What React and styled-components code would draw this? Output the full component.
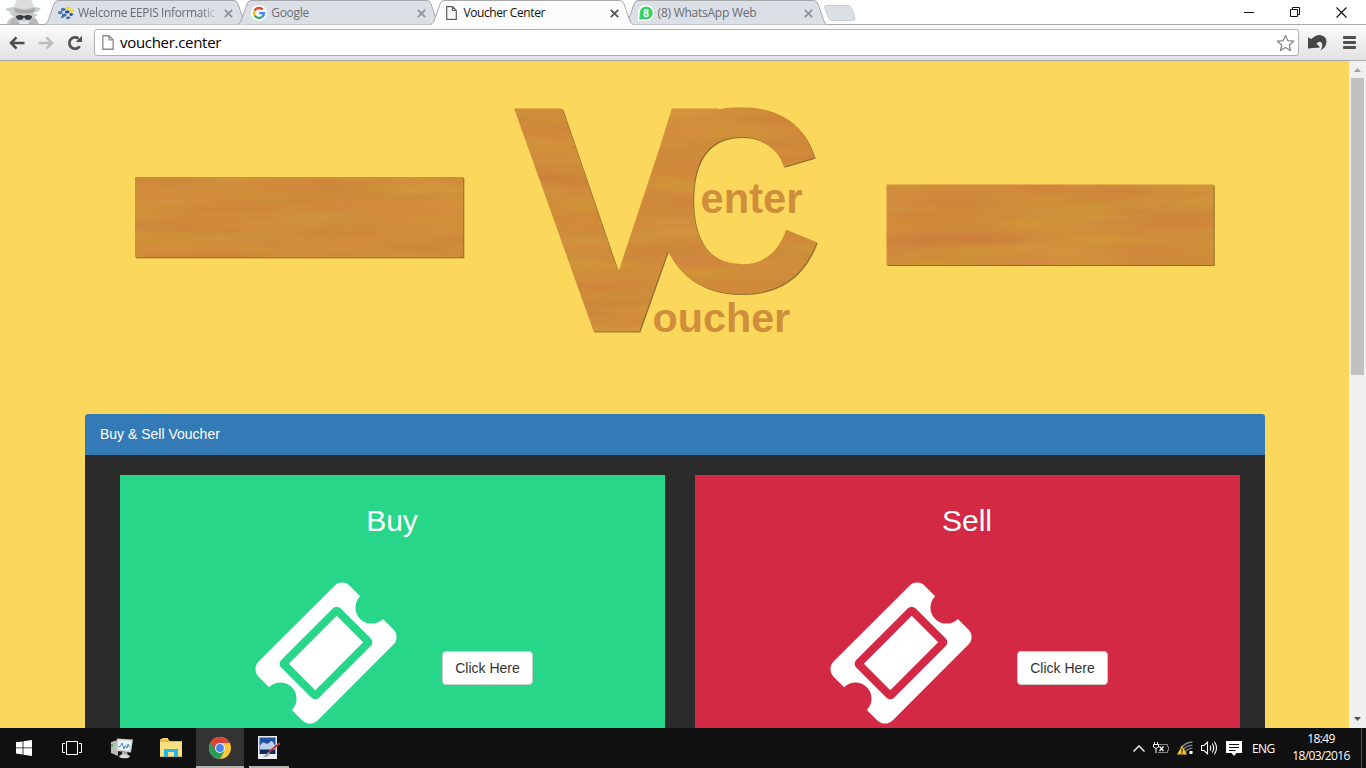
import React from 'react';
import styled, { createGlobalStyle } from 'styled-components';

const GlobalStyle = createGlobalStyle`
  * { box-sizing: border-box; }
  html, body { margin: 0; padding: 0; overflow: hidden; }
  svg { display: block; flex: none; }
`;

const ui = `"Open Sans", "Noto Sans", sans-serif`;

const Screen = styled.div`
  width: 1366px;
  height: 768px;
  display: flex;
  flex-direction: column;
  overflow: hidden;
  background: #fff;
  font-family: ${ui};
`;

/* ---------- browser chrome ---------- */

const TabStrip = styled.div`
  display: flex;
  height: 25px;
  flex: none;
  padding-left: 5px;
  border-bottom: 1px solid #a9a9a9;
`;

const Tabs = styled.div`
  display: flex;
  margin-left: 1px;
  height: 25px;
`;

const TabBox = styled.div`
  display: grid;
  width: 203px;
  height: 25px;
  margin-right: -9.8px;
  z-index: ${(p) => (p.$active ? 2 : 1)};
  > * { grid-area: 1 / 1; }
`;

const TabContent = styled.div`
  display: flex;
  align-items: center;
  height: 25px;
  padding: 1px 14px 0 ${(p) => (p.$active ? 16 : 14)}px;
`;

const TabTitle = styled.span`
  flex: 1;
  margin-left: ${(p) => (p.$active ? 6 : 4)}px;
  overflow: hidden;
  white-space: nowrap;
  font-size: 12px;
  line-height: 20px;
  letter-spacing: ${(p) => p.$spacing}px;
  color: ${(p) => (p.$active ? '#111' : '#6a6c70')};
  ${(p) => p.$fade && 'mask-image: linear-gradient(90deg, #000 122px, transparent 141px);'}
`;

const NewTabButton = styled.div`
  margin-left: 6px;
`;

const WindowButtons = styled.div`
  display: flex;
  align-items: center;
  gap: 35px;
  margin-left: auto;
  padding-right: 19px;
  height: 24px;
`;

const Toolbar = styled.div`
  display: flex;
  align-items: center;
  height: 36px;
  flex: none;
  padding: 0 10px 0 9px;
  background: linear-gradient(#fbfbfb, #e2e2e2);
  border-bottom: 1px solid #a8a8a8;
`;

const NavIcons = styled.div`
  display: flex;
  align-items: center;
  gap: 13px;
  width: 85px;
`;

const AddressBar = styled.div`
  display: flex;
  align-items: center;
  width: 1205px;
  height: 27px;
  padding: 0 3px 0 7px;
  margin-right: 9px;
  background: #fff;
  border: 1px solid #b0b0b0;
  border-radius: 3px;
`;

const Url = styled.span`
  flex: 1;
  margin: -1px 0 0 6px;
  font-size: 15px;
  line-height: 20px;
  letter-spacing: ${(p) => p.$spacing}px;
  color: #000;
`;

const MenuIcon = styled.div`
  display: flex;
  flex-direction: column;
  gap: 2px;
  margin-left: 16px;
`;

const MenuLine = styled.i`
  width: 13px;
  height: 3px;
  border-radius: 1px;
  background: #505050;
`;

/* ---------- page ---------- */

const Viewport = styled.div`
  display: flex;
  height: 667px;
  flex: none;
  overflow: hidden;
`;

const Page = styled.main`
  width: 1349px;
  background: #fbd75b;
  font-family: "Liberation Sans", Arial, sans-serif;
`;

const Panel = styled.section`
  width: 1180px;
  margin-left: 85px;
`;

const PanelHeading = styled.header`
  height: 41px;
  padding: 0 15px;
  border-radius: 3px 3px 0 0;
  background: #337ab7;
  color: #fff;
  font-size: 14px;
  line-height: 40px;
`;

const PanelBody = styled.div`
  display: flex;
  gap: 30px;
  height: 300px;
  padding: 20px 25px 0 35px;
  background: #2b2b2b;
`;

const Tile = styled.article`
  width: 545px;
  background: ${(p) => p.$color};
`;

const TileTitle = styled.h2`
  margin: 0;
  padding: 29px 1px 0 0;
  text-align: center;
  font-size: 30px;
  font-weight: 400;
  line-height: 34px;
  color: #fff;
`;

const TileRow = styled.div`
  display: flex;
  align-items: flex-start;
  padding: 40px 0 0 131px;
`;

const ClickButton = styled.button`
  width: 91px;
  height: 34px;
  margin: 73px 0 0 41px;
  padding: 0;
  border: 1px solid #ccc;
  border-radius: 4px;
  background: #fff;
  color: #333;
  font: 14px/20px "Liberation Sans", Arial, sans-serif;
`;

const Scrollbar = styled.div`
  display: flex;
  flex-direction: column;
  align-items: center;
  width: 17px;
  background: #f0f0f0;
`;

const ScrollThumb = styled.div`
  width: 13px;
  height: 297px;
  margin-bottom: auto;
  background: #c1c1c1;
`;

/* ---------- taskbar ---------- */

const Taskbar = styled.footer`
  display: flex;
  height: 40px;
  flex: none;
  background: #101010;
  color: #fff;
`;

const TaskItem = styled.div`
  display: flex;
  align-items: center;
  justify-content: center;
  width: ${(p) => p.$width || 49}px;
  height: 40px;
  background: ${(p) => (p.$active ? '#333' : 'transparent')};
  border-bottom: ${(p) => (p.$open ? '2px solid #b5b3ad' : 'none')};
  margin-right: ${(p) => p.$gap || 0}px;
  svg { margin-top: ${(p) => (p.$open ? 2 : 0)}px; }
`;

const Tray = styled.div`
  display: flex;
  align-items: center;
  gap: 8px;
  margin-left: auto;
  height: 40px;
`;

const Language = styled.span`
  width: 26px;
  margin-left: 2px;
  font-size: 12px;
  letter-spacing: -0.6px;
`;

const Clock = styled.div`
  width: 76px;
  padding-right: 6px;
  text-align: center;
  font-size: 12px;
  line-height: 17px;
  letter-spacing: -0.62px;
  white-space: nowrap;
  margin-top: -2px;
`;

const DesktopEdge = styled.i`
  width: 5px;
  height: 40px;
  margin-left: -9px;
  border-left: 1px solid #555;
`;

/* ---------- icons ---------- */

const Incognito = () => (
  <svg width="38" height="24" viewBox="0 0 38 24">
    <path d="M2 24q0-5 7-7l-5-4 3-1Q1 11 0 9q5-2 9-2l3-7h14l3 7q5 0 7 2-3 3-8 4l5 2-5 3q6 2 6 6z" fill="#c9cccd" />
    <path d="M9 7l3-7h14l3 7-10 2z" fill="#dadddd" />
    <path d="M9 8q10 4 21 0l-1 4q-10 3-19 0z" fill="#a5a7a8" />
    <path d="M11 16q4-2 8 0 4-2 8 0 0 4-4 4-3 0-4-3-1 3-4 3-4 0-4-4z" fill="#3c3d3f" />
    <path d="M10 17l4 7-9 0q0-5 5-7zm18 0l-4 7 9 0q0-5-5-7z" fill="#b5b7b8" />
    <path d="M14 20l5 2 5-2-1 4h-8z" fill="#e9eaea" />
  </svg>
);

const TabShape = ({ active }) => (
  <svg width="203" height="25" viewBox="0 0 203 25">
    <path
      d="M0 24.500Q3 24.500 4 21L10 4Q11 .8 14 .5H190Q193 .8 194 4L200 21Q201 24.500 203 24.500"
      fill={active ? '#fcfcfc' : '#dbdfe6'}
      stroke="#a5a7aa"
    />
    {active && <path d="M2 24.500H202" stroke="#fbfbfb" strokeWidth="2" />}
  </svg>
);

const PageGlyph = ({ w = 11, h = 14, color = '#5c5c5c' }) => (
  <svg width={w} height={h} viewBox="0 0 11 14">
    <path d="M.7.7H6.500L10.300 4.500V13.300H.7zM6.500.7V4.500H10.300" fill="#fff" stroke={color} strokeWidth="1.200" />
  </svg>
);

const Cross = ({ color = '#909296' }) => (
  <svg width="9" height="9" viewBox="0 0 9 9">
    <path d="M.8.8l7.400 7.400M8.200.8L.8 8.200" stroke={color} strokeWidth="1.800" />
  </svg>
);

const EepisIcon = () => (
  <svg width="16" height="16" viewBox="0 0 16 16">
    <path d="M7 3.500l2-2 3 .5 1 2-3 1zM12 4.500l3-.5 1 2-2 2-2-1z" fill="#f2dc2a" />
    <path d="M3 3.500l3-.8 2 1.600-2 2-3-.6zM0 6.500l3-.6 2 1.600-2 1.800L.5 9z" fill="#4a76b8" />
    <path d="M7 6l3-.8 2 1.600-2 1.800-3-.6zM11.500 8.500l2.500-.5 1.500 1.500-2 1.500-2-.5z" fill="#2a5196" />
    <path d="M4 9.200l3-.8 2 1.600-2 1.800-3-.6zM2.500 12l1.500-1 2 1-1 1.300zM8 12.200l2.500-1 2 1.400-1.700 1.600-2.500-.4z" fill="#3b69ac" />
  </svg>
);

const GoogleIcon = () => (
  <svg width="16" height="16" viewBox="0 0 16 16">
    <circle cx="8" cy="8" r="8" fill="#fff" />
    <g fill="none" strokeWidth="2.400">
      <path d="M11.700 4.500A5 5 0 0 0 3.700 5.600" stroke="#ea4335" />
      <path d="M3.700 5.600A5 5 0 0 0 3.700 10.500" stroke="#fbbc05" />
      <path d="M3.700 10.500A5 5 0 0 0 11.200 11.800" stroke="#34a853" />
      <path d="M11.200 11.800A5 5 0 0 0 13 8.100H8.200" stroke="#4285f4" />
    </g>
  </svg>
);

const WhatsAppIcon = () => (
  <svg width="16" height="16" viewBox="0 0 16 16">
    <path d="M0 16V8A8 8 0 1 1 8 16z" fill="#fff" />
    <path d="M1.300 14.700L1.800 9A6.500 6.500 0 1 1 6 14z" fill="#3bcf64" />
    <text x="8" y="11.500" textAnchor="middle" fontFamily="Liberation Sans" fontWeight="700" fontSize="10" fill="#fff">8</text>
  </svg>
);

const NewTab = () => (
  <svg width="34" height="25" viewBox="0 0 34 25">
    <path d="M3.500 5.500H25Q27.500 5.500 28.500 8L32 18.500Q32.500 20.500 30 20.500H9.500Q6.500 20.500 5.500 18L1.800 7.500Q1.300 5.500 3.500 5.500z" fill="#dbdfe6" stroke="#c9ccd0" />
  </svg>
);

const BackArrow = ({ color }) => (
  <svg width="16" height="14" viewBox="0 0 16 14">
    <path d="M7.500 1.300L2 7l5.500 5.700M2.500 7H15.500" fill="none" stroke={color} strokeWidth="2.600" />
  </svg>
);

const ForwardArrow = () => (
  <svg width="16" height="14" viewBox="0 0 16 14">
    <path d="M8.500 1.300L14 7l-5.500 5.700M13.500 7H.5" fill="none" stroke="#bcbcbc" strokeWidth="2.600" />
  </svg>
);

const Reload = () => (
  <svg width="16" height="16" viewBox="0 0 16 16">
    <path d="M12.700 11.300A5.700 5.700 0 1 1 11.500 3.500" fill="none" stroke="#505050" strokeWidth="2.700" />
    <path d="M15 .8V7H8.700z" fill="#505050" />
  </svg>
);

const Star = () => (
  <svg width="19" height="18" viewBox="0 0 19 18">
    <path d="M9.500 1.500L11.800 6.600 17.600 7.200 13.300 11 14.500 16.500 9.500 13.600 4.500 16.500 5.700 11 1.400 7.200 7.200 6.600z" fill="#fff" stroke="#858585" strokeWidth="1.200" strokeLinejoin="round" />
  </svg>
);

const UndoIcon = () => (
  <svg width="19" height="17" viewBox="0 0 19 17">
    <path d="M0 3.500L3.500 5Q8 .5 13 1.200 18.600 2.500 18.500 8 18 13.500 12.500 16.500 15.500 11.500 13.500 8.500 11.500 6.500 8.500 9.500L12 13.500 0 14.500z" fill="#464646" />
  </svg>
);

const WindowIcon = ({ kind }) => (
  <svg width="11" height="11" viewBox="0 0 11 11" fill="none" stroke="#111" strokeWidth={kind === 'close' ? 1.200 : 1}>
    {kind === 'min' && <path d="M0 5.500H10" />}
    {kind === 'max' && <path d="M.5 2.500H7.500V9.500H.5zM2.500 2.500V.5H9.500V7.500H7.500" />}
    {kind === 'close' && <path d="M.5.5L10.500 10.500M10.500.5L.5 10.500" />}
  </svg>
);

const ScrollArrow = ({ down }) => (
  <svg width="17" height="17" viewBox="0 0 17 17">
    <path d={down ? 'M5 6H12L8.500 10z' : 'M5 11H12L8.500 7z'} fill={down ? '#505050' : '#a0a0a0'} />
  </svg>
);

const TicketIcon = () => (
  <svg width="150" height="150" viewBox="0 0 1792 1792" fill="#fff">
    <path d="M1024 452l316 316-572 572-316-316zm-211 979l618-618q19-19 19-45t-19-45l-362-362q-18-18-45-18t-45 18l-618 618q-19 19-19 45t19 45l362 362q18 18 45 18t45-18zm889-637l-907 908q-37 37-90.500 37t-90.500-37l-126-125q56-56 56-136t-56-136-136-56-136 56l-125-126q-37-37-37-90.500t37-90.500l907-906q37-37 90.500-37t90.500 37l125 125q-56 56-56 136t56 136 136 56 136-56l126 125q37 37 37 90.500t-37 90.500z" />
  </svg>
);

/* Wooden sign with two boards either side of the VC monogram */
const Banner = () => (
  <svg width="1349" height="353" viewBox="0 61 1349 353">
    <defs>
      <filter id="wood" filterUnits="userSpaceOnUse" x="120" y="90" width="1110" height="260" colorInterpolationFilters="sRGB">
        <feTurbulence type="fractalNoise" baseFrequency="0.008 0.065" numOctaves="2" seed="7" />
        <feColorMatrix values="0.06 0 0 0 0.785  0.05 0.1 0 0 0.475  0 0 0.05 0 0.205  0 0 0 0 1" result="grain" />
        <feComposite in="grain" in2="SourceAlpha" operator="in" result="body" />
        <feOffset in="SourceAlpha" dx="0.6" dy="0.6" result="off" />
        <feFlood floodColor="#8e6f2c" />
        <feComposite in2="off" operator="in" result="edge" />
        <feMerge><feMergeNode in="edge" /><feMergeNode in="body" /></feMerge>
      </filter>
    </defs>
    <g filter="url(#wood)">
      <rect x="135" y="177" width="328.300" height="80.300" />
      <rect x="886.500" y="184.500" width="327.200" height="80.500" />
    </g>
    <g filter="url(#wood)" fontFamily="Liberation Sans, Arial, sans-serif" fontWeight="700">
      <text transform="translate(512 331.500) scale(0.965 1)" fontSize="324">V</text>
      <path d="M559 109H562.500L618.300 272 672.500 109H676L622 302H614z" />
      <text transform="translate(648 291.500) scale(0.92 1)" fontSize="264">C</text>
    </g>
    <g fill="#d08d3b" fontFamily="Liberation Sans, Arial, sans-serif" fontWeight="700">
      <text x="700.500" y="213" fontSize="41.700">enter</text>
      <text x="652.500" y="331.500" fontSize="41.300">oucher</text>
    </g>
  </svg>
);

const StartIcon = () => (
  <svg width="16" height="16" viewBox="0 0 16 16" fill="#fff">
    <path d="M0 2.300L6.600 1.400V7.500H0zM7.400 1.300L16 0V7.500H7.400zM0 8.300H6.600V14.500L0 13.600zM7.400 8.300H16V16L7.400 14.700z" />
  </svg>
);

const TaskViewIcon = () => (
  <svg width="20" height="14" viewBox="0 0 20 14" fill="none" stroke="#fff">
    <path d="M4.500.5H15.500V13.500H4.500zM3 2.500H.5V11.500H3M17 2.500H19.500V11.500H17" />
  </svg>
);

const MonitorIcon = () => (
  <svg width="24" height="22" viewBox="0 0 24 22">
    <path d="M1 5L8 3V19L1 16z" fill="#b9bcb8" /><path d="M1 7l2 0v3H1z" fill="#6cae5c" />
    <path d="M7 1.500L23 2.500 21 15.500 6 14z" fill="#c9cccb" /><path d="M8.500 3L21.500 4 19.800 13.800 7.800 12.500z" fill="#eef6fa" />
    <path d="M8.500 10l2-1 1.500-3 2 6 1.500-3.500 1.500 2.500 1-4 1.500 3" fill="none" stroke="#3d88bd" />
    <path d="M12 15h5l1 4H11z" fill="#aaa" /><ellipse cx="14.500" cy="19.300" rx="5.500" ry="2" fill="#d7d7d7" />
  </svg>
);

const FolderIcon = () => (
  <svg width="22" height="20" viewBox="0 0 22 20">
    <path d="M0 1H8L10 3H22V19H0z" fill="#e8b93e" /><path d="M0 4H22V18H0z" fill="#fbdf83" />
    <path d="M2 0H8V2H2z" fill="#f4d068" /><path d="M4 19V11H18V19H14V14H8V19z" fill="#1fb6ee" />
  </svg>
);

const ChromeIcon = () => (
  <svg width="22" height="22" viewBox="0 0 22 22">
    <circle cx="11" cy="11" r="11" fill="#fbc93c" />
    <path d="M11 11L1.500 5.500A11 11 0 0 0 11 22L15.500 14z" fill="#289b58" />
    <path d="M11 6H20.800A11 11 0 0 0 1.500 5.500L6.600 13.500z" fill="#db4437" />
    <circle cx="11" cy="11" r="5" fill="#f5f5f5" /><circle cx="11" cy="11" r="3.900" fill="#4285f4" />
  </svg>
);

const PaintIcon = () => (
  <svg width="23" height="24" viewBox="0 0 23 24">
    <path d="M0 0H19V23H0z" fill="#e9edf1" /><path d="M1.500 1.500H17.500V18H1.500z" fill="#22529b" />
    <path d="M2 10Q4 5 7 7t5-1 5 4V14H2z" fill="#b9cfe9" /><path d="M2 13.500H17V18H2z" fill="#11295f" />
    <path d="M22 7L11 16" stroke="#c13636" strokeWidth="1.800" /><path d="M11 15.500L5 21l4-.5 3-3z" fill="#999" />
  </svg>
);

const ChevronUp = () => (
  <svg width="12" height="7" viewBox="0 0 12 7"><path d="M.5 6.500L6 1l5.500 5.500" fill="none" stroke="#fff" strokeWidth="1.300" /></svg>
);

const BatteryIcon = () => (
  <svg width="16" height="12" viewBox="0 0 16 12" fill="none" stroke="#fff">
    <path d="M1.500 0V2M4.500 0V2M.5 2.500H5.500V5L3 6.500.5 5zM3 6.500V11" />
    <path d="M6 2.500H14.500V4.500H15.500V8.500H14.500V10.500H5" stroke="#888" /><path d="M6.500 4.500L10.500 9M10.500 4.500L6.500 9" strokeWidth="1.200" />
  </svg>
);

const WifiIcon = () => (
  <svg width="16" height="14" viewBox="0 0 16 14">
    <g fill="none" stroke="#858585" strokeWidth="1.300"><path d="M4 7Q8 1.500 15.500 1M6 9Q9 4.500 15.500 4.200M8 11Q10 8 15.500 7.200" /></g>
    <path d="M12.500 10H15.500V13H12.500z" fill="#fff" /><path d="M5 4.500L10 13.500H0z" fill="#f4bf2a" />
    <path d="M5 7.500V10.800M5 11.500V12.700" stroke="#222" strokeWidth="1.200" />
  </svg>
);

const SpeakerIcon = () => (
  <svg width="17" height="14" viewBox="0 0 17 14" fill="none" stroke="#fff" strokeWidth="1.100">
    <path d="M.6 4.500H3L6.500 1.200V12.800L3 9.500H.6zM9 4.500Q10.500 7 9 9.500M11.300 2.500Q14 7 11.300 11.500M13.500.8Q17.500 7 13.500 13.200" />
  </svg>
);

const MessageIcon = () => (
  <svg width="16" height="15" viewBox="0 0 16 15">
    <path d="M0 0H16V12H10.500L8 15 5.500 12H0z" fill="#fff" /><path d="M3 3.500H13M3 6.500H13M3 9.500H9.500" stroke="#111" />
  </svg>
);

const tabs = [
  { title: 'Welcome EEPIS Informatic', icon: <EepisIcon />, spacing: -0.38, fade: true },
  { title: 'Google', icon: <GoogleIcon />, spacing: -0.3 },
  { title: 'Voucher Center', icon: <PageGlyph />, spacing: -0.4, active: true },
  { title: '(8) WhatsApp Web', icon: <WhatsAppIcon />, spacing: -0.25 },
];

const tiles = [
  { title: 'Buy', color: '#28d68a' },
  { title: 'Sell', color: '#d32945' },
];

export default function App() {
  return (
    <Screen>
      <GlobalStyle />
      <TabStrip>
        <Incognito />
        <Tabs>
          {tabs.map((t) => (
            <TabBox key={t.title} $active={t.active}>
              <TabShape active={t.active} />
              <TabContent $active={t.active}>
                {t.icon}
                <TabTitle $active={t.active} $fade={t.fade} $spacing={t.spacing}>{t.title}</TabTitle>
                <Cross color={t.active ? '#555' : undefined} />
              </TabContent>
            </TabBox>
          ))}
        </Tabs>
        <NewTabButton><NewTab /></NewTabButton>
        <WindowButtons>
          <WindowIcon kind="min" />
          <WindowIcon kind="max" />
          <WindowIcon kind="close" />
        </WindowButtons>
      </TabStrip>
      <Toolbar>
        <NavIcons>
          <BackArrow color="#4c4c4c" />
          <ForwardArrow />
          <Reload />
        </NavIcons>
        <AddressBar>
          <PageGlyph w={12} h={15} color="#8a8a8a" />
          <Url $spacing={-0.3}>voucher.center</Url>
          <Star />
        </AddressBar>
        <UndoIcon />
        <MenuIcon><MenuLine /><MenuLine /><MenuLine /></MenuIcon>
      </Toolbar>
      <Viewport>
        <Page>
          <Banner />
          <Panel>
            <PanelHeading>Buy &amp; Sell Voucher</PanelHeading>
            <PanelBody>
              {tiles.map((t) => (
                <Tile key={t.title} $color={t.color}>
                  <TileTitle>{t.title}</TileTitle>
                  <TileRow>
                    <TicketIcon />
                    <ClickButton>Click Here</ClickButton>
                  </TileRow>
                </Tile>
              ))}
            </PanelBody>
          </Panel>
        </Page>
        <Scrollbar>
          <ScrollArrow />
          <ScrollThumb />
          <ScrollArrow down />
        </Scrollbar>
      </Viewport>
      <Taskbar>
        <TaskItem $width={48}><StartIcon /></TaskItem>
        <TaskItem $width={48}><TaskViewIcon /></TaskItem>
        <TaskItem $width={52}><MonitorIcon /></TaskItem>
        <TaskItem $width={46} $gap={2}><FolderIcon /></TaskItem>
        <TaskItem $width={48} $active $open $gap={5}><ChromeIcon /></TaskItem>
        <TaskItem $width={40} $open><PaintIcon /></TaskItem>
        <Tray>
          <ChevronUp />
          <BatteryIcon />
          <WifiIcon />
          <SpeakerIcon />
          <MessageIcon />
          <Language>ENG</Language>
          <Clock>18:49<br />18/03/2016</Clock>
          <DesktopEdge />
        </Tray>
      </Taskbar>
    </Screen>
  );
}
